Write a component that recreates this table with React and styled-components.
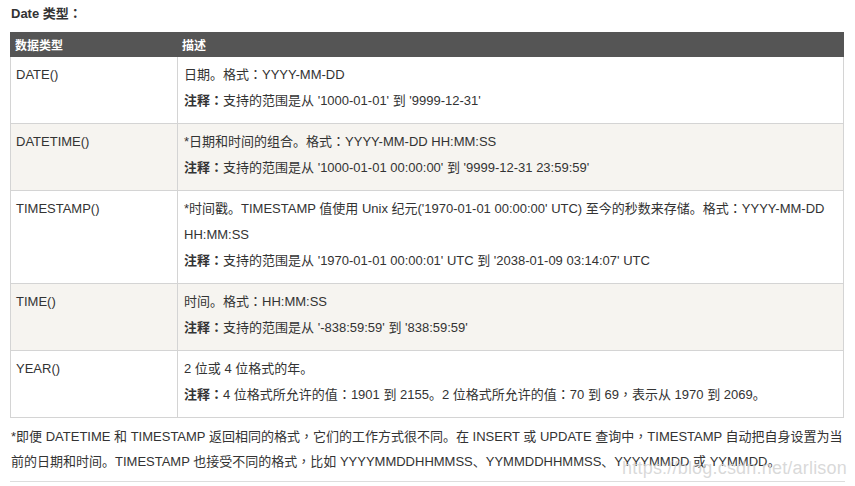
import React from "react";
import styled, { createGlobalStyle } from "styled-components";

const GlobalStyle = createGlobalStyle`
  body {
    margin: 0;
    background: #fff;
    font-family: "Liberation Sans", Arial, "Noto Sans CJK SC", sans-serif;
    color: #333;
  }
`;

const Page = styled.div`
  position: relative;
  width: 855px;
  height: 486px;
  padding: 5px 10px 0 10px;
  box-sizing: border-box;
  overflow: hidden;
`;

const Title = styled.div`
  font-size: 13px;
  font-weight: bold;
  line-height: 18px;
  padding-left: 1px;
  margin-bottom: 9px;
`;

const Table = styled.table`
  width: 834px;
  border-collapse: collapse;
  font-size: 13px;
  table-layout: fixed;
`;

const HeadCell = styled.th`
  background: #555;
  color: #fff;
  font-size: 12px;
  font-weight: bold;
  text-align: left;
  height: 24px;
  padding: 0 4px;
  border: 1px solid #555;
  box-sizing: border-box;
`;

const Row = styled.tr`
  background: ${(p) => (p.$alt ? "#f6f4f0" : "#fff")};
`;

const Cell = styled.td`
  border: 1px solid #d4d4d4;
  vertical-align: top;
  padding: 5px 6px 9px 6px;
  line-height: 26px;
  &:first-child {
    padding-left: 5px;
  }
`;

const Para = styled.p`
  margin: 0;
`;

const Note = styled.b`
  font-weight: bold;
`;

/* full-width punctuation drawn centred, as the original font does */
const Punct = styled.span`
  font-family: "Noto Sans CJK TC", sans-serif;
  line-height: 0;
`;

const Footer = styled.div`
  font-size: 13px;
  line-height: 25px;
  padding: 6px 0 7px 1px;
  border-bottom: 1px solid #ddd;
`;

const Watermark = styled.div`
  position: absolute;
  right: 8px;
  bottom: 7px;
  font-size: 18px;
  color: rgba(210, 210, 210, 0.85);
  letter-spacing: 0.2px;
`;

const fw = (text) =>
  text.split(/([：，])/).map((part, i) =>
    part === "：" || part === "，" ? <Punct key={i}>{part}</Punct> : part
  );

const rows = [
  {
    type: "DATE()",
    desc: ["日期。格式：YYYY-MM-DD"],
    note: "支持的范围是从 '1000-01-01' 到 '9999-12-31'",
  },
  {
    type: "DATETIME()",
    desc: ["*日期和时间的组合。格式：YYYY-MM-DD HH:MM:SS"],
    note: "支持的范围是从 '1000-01-01 00:00:00' 到 '9999-12-31 23:59:59'",
  },
  {
    type: "TIMESTAMP()",
    desc: [
      "*时间戳。TIMESTAMP 值使用 Unix 纪元('1970-01-01 00:00:00' UTC) 至今的秒数来存储。格式：YYYY-MM-DD",
      "HH:MM:SS",
    ],
    note: "支持的范围是从 '1970-01-01 00:00:01' UTC 到 '2038-01-09 03:14:07' UTC",
  },
  {
    type: "TIME()",
    desc: ["时间。格式：HH:MM:SS"],
    note: "支持的范围是从 '-838:59:59' 到 '838:59:59'",
  },
  {
    type: "YEAR()",
    desc: ["2 位或 4 位格式的年。"],
    note: "4 位格式所允许的值：1901 到 2155。2 位格式所允许的值：70 到 69，表示从 1970 到 2069。",
  },
];

export default function App() {
  return (
    <>
      <GlobalStyle />
      <Page>
        <Title>Date 类型{fw("：")}</Title>
        <Table>
          <colgroup>
            <col style={{ width: 167 }} />
            <col />
          </colgroup>
          <thead>
            <tr>
              <HeadCell>数据类型</HeadCell>
              <HeadCell>描述</HeadCell>
            </tr>
          </thead>
          <tbody>
            {rows.map((r, i) => (
              <Row key={r.type} $alt={i % 2 === 1}>
                <Cell>{r.type}</Cell>
                <Cell>
                  <Para>
                    {r.desc.map((line, j) => (
                      <React.Fragment key={j}>
                        {j > 0 && <br />}
                        {fw(line)}
                      </React.Fragment>
                    ))}
                  </Para>
                  <Para>
                    <Note>注释{fw("：")}</Note>
                    {fw(r.note)}
                  </Para>
                </Cell>
              </Row>
            ))}
          </tbody>
        </Table>
        <Footer>
          {fw(
            "*即便 DATETIME 和 TIMESTAMP 返回相同的格式，它们的工作方式很不同。在 INSERT 或 UPDATE 查询中，TIMESTAMP 自动把自身设置为当"
          )}
          <br />
          {fw(
            "前的日期和时间。TIMESTAMP 也接受不同的格式，比如 YYYYMMDDHHMMSS、YYMMDDHHMMSS、YYYYMMDD 或 YYMMDD。"
          )}
        </Footer>
        <Watermark>https://blog.csdn.net/arlison</Watermark>
      </Page>
    </>
  );
}
